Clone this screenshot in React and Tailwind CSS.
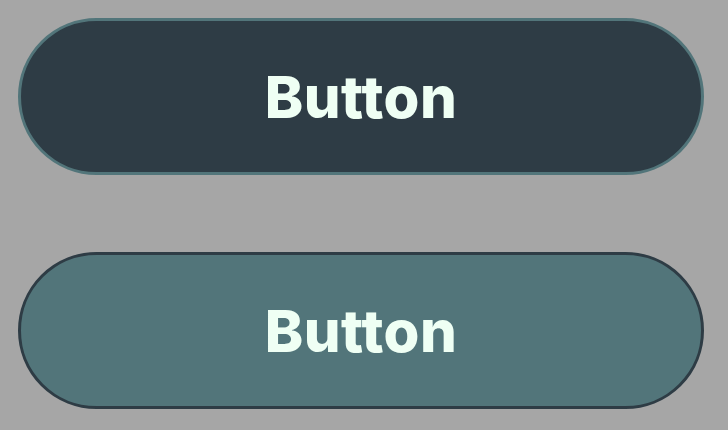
import React from 'react';

const Button = ({ variant }) => {
  const styles =
    variant === 'dark'
      ? 'bg-[#2e3c45] border-[#52757a]'
      : 'bg-[#52757a] border-[#2e3c45]';
  return (
    <button
      className={`w-[686px] h-[157px] rounded-full border-[3px] ${styles} flex items-center justify-center pt-[2px] text-[#effff4] text-[58px] font-extrabold tracking-[0.5px] [font-variant-ligatures:none] [font-feature-settings:'liga'_0,'calt'_0]`}
      style={{ fontFamily: 'Inter, "Noto Sans", sans-serif' }}
    >
      Button
    </button>
  );
};

export default function App() {
  return (
    <div className="w-[728px] h-[430px] bg-[#a6a6a6] flex flex-col gap-[77px] pt-[18px] pl-[18px]">
      <Button variant="dark" />
      <Button variant="teal" />
    </div>
  );
}
